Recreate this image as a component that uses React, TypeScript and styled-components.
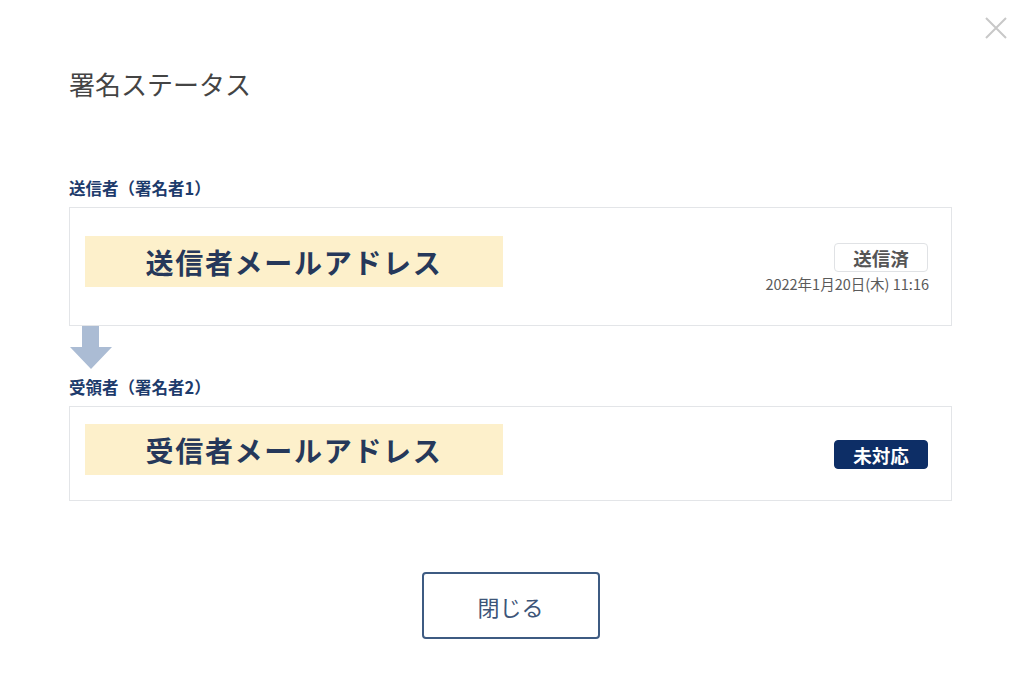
import React from "react";
import styled, { createGlobalStyle } from "styled-components";

const GlobalStyle = createGlobalStyle`
  html, body {
    margin: 0;
    padding: 0;
    background: #fff;
  }
  body {
    font-family: "Noto Sans CJK JP", "Noto Sans", sans-serif;
    color: #333;
  }
`;

const Modal = styled.div`
  position: relative;
  width: 1023px;
  height: 696px;
  box-sizing: border-box;
  padding: 66px 71px 0 69px;
  background: #fff;
`;

const CloseButton = styled.button`
  position: absolute;
  top: 14px;
  right: 13px;
  width: 28px;
  height: 28px;
  padding: 0;
  border: none;
  background: none;
  cursor: pointer;
`;

const Title = styled.h2`
  margin: 0;
  font-size: 26px;
  line-height: 36px;
  font-weight: 400;
  color: #444;
`;

const SignerLabel = styled.div<{ $top: number }>`
  margin-top: ${({ $top }) => $top}px;
  margin-bottom: 8px;
  font-size: 16.5px;
  line-height: 22px;
  font-weight: 700;
  color: #1d3b6c;
`;

const Card = styled.div<{ $pt: number; $pb: number }>`
  display: flex;
  justify-content: space-between;
  align-items: flex-start;
  border: 1px solid #e3e5e8;
  padding: ${({ $pt, $pb }) => `${$pt}px 23px ${$pb}px 15px`};
`;

const Address = styled.div`
  width: 418px;
  height: 51px;
  display: flex;
  align-items: center;
  justify-content: center;
  background: #fdf0cb;
  font-size: 28px;
  font-weight: 700;
  letter-spacing: 1.7px;
  color: #26385a;
`;

const StatusColumn = styled.div<{ $top: number }>`
  margin-top: ${({ $top }) => $top}px;
  display: flex;
  flex-direction: column;
  align-items: flex-end;
  gap: 3px;
`;

const Badge = styled.span<{ $done?: boolean }>`
  width: 94px;
  height: 29px;
  box-sizing: border-box;
  display: flex;
  align-items: center;
  justify-content: center;
  border-radius: 4px;
  font-size: 18.5px;
  font-weight: 700;
  border: 1px solid ${({ $done }) => ($done ? "#e0e2e5" : "#0d2e66")};
  background: ${({ $done }) => ($done ? "#fff" : "#0d2e66")};
  color: ${({ $done }) => ($done ? "#555" : "#fff")};
`;

const DateText = styled.span`
  font-size: 14.5px;
  line-height: 18px;
  color: #5a5a5a;
  margin-right: -1px;
`;

const ArrowWrap = styled.div`
  margin-left: 1px;
  height: 44px;
  display: flex;
`;

const Footer = styled.div`
  display: flex;
  justify-content: center;
  margin-top: 71px;
`;

const CloseAction = styled.button`
  width: 178px;
  height: 67px;
  border: 2px solid #3e5b82;
  border-radius: 4px;
  background: #fff;
  font-family: "Noto Sans CJK JP", "Noto Sans", sans-serif;
  font-size: 22px;
  color: #3d5578;
  cursor: pointer;
`;

const DownArrow = () => (
  <svg width="42" height="44" viewBox="0 0 42 44">
    <path d="M12 0 H29 V21 H42 L21 43 L0 21 H12 Z" fill="#abbcd4" />
  </svg>
);

const App: React.FC = () => (
  <>
    <GlobalStyle />
    <Modal>
      <CloseButton aria-label="閉じる">
        <svg width="28" height="28" viewBox="0 0 28 28">
          <path d="M4 4 L24 24 M24 4 L4 24" stroke="#c8c8c8" strokeWidth="2" />
        </svg>
      </CloseButton>
      <Title>署名ステータス</Title>

      <SignerLabel $top={75}>送信者（署名者1）</SignerLabel>
      <Card $pt={28} $pb={32}>
        <Address>送信者メールアドレス</Address>
        <StatusColumn $top={7}>
          <Badge $done>送信済</Badge>
          <DateText>2022年1月20日(木) 11:16</DateText>
        </StatusColumn>
      </Card>

      <ArrowWrap>
        <DownArrow />
      </ArrowWrap>

      <SignerLabel $top={6}>受領者（署名者2）</SignerLabel>
      <Card $pt={17} $pb={25}>
        <Address>受信者メールアドレス</Address>
        <StatusColumn $top={16}>
          <Badge>未対応</Badge>
        </StatusColumn>
      </Card>

      <Footer>
        <CloseAction>閉じる</CloseAction>
      </Footer>
    </Modal>
  </>
);

export default App;
